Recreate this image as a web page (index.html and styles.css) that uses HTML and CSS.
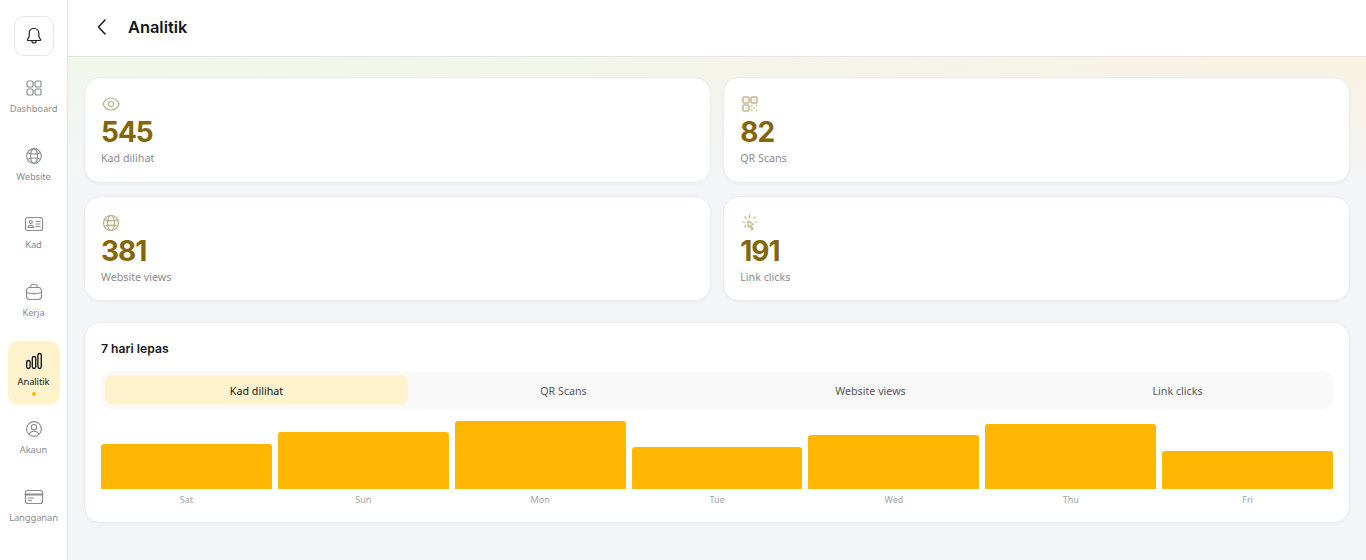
FILE: index.html
```html
<!DOCTYPE html>
<html lang="ms">
<head>
    <meta charset="UTF-8">
    <meta name="viewport" content="width=device-width, initial-scale=1.0">
    <title>Analitik</title>
    <link rel="stylesheet" href="styles.css">
</head>
<body>
    <aside class="sidebar">
        <button class="bell">
            <svg width="20" height="20" viewBox="0 0 20 20" fill="none" stroke="#22242a" stroke-width="1.2" stroke-linecap="round" stroke-linejoin="round"><path d="M10 2.500c-2.900 0-4.800 2.100-4.800 4.900v2.700c0 1.300-1.200 2.200-1.800 3.400-.2.500.1 1 .7 1h11.800c.6 0 .9-.5.7-1-.6-1.200-1.800-2.100-1.800-3.400V7.400c0-2.800-1.900-4.900-4.800-4.900z"/><path d="M7.800 14.700c.1 1.300 1 2.300 2.200 2.300s2.100-1 2.200-2.300"/></svg>
        </button>
        <nav class="nav">
            <a class="nav-item">
                <svg width="20" height="20" viewBox="0 0 20 20" fill="none" stroke="#8b8d93" stroke-width="1.2"><rect x="3" y="3" width="6" height="6" rx="1.6"/><rect x="11" y="3" width="6" height="6" rx="1.6"/><rect x="3" y="11" width="6" height="6" rx="1.6"/><rect x="11" y="11" width="6" height="6" rx="1.6"/></svg>
                <span>Dashboard</span>
            </a>
            <a class="nav-item">
                <svg width="20" height="20" viewBox="0 0 20 20" fill="none" stroke="#8b8d93" stroke-width="1.1"><circle cx="10" cy="10" r="7.4"/><ellipse cx="10" cy="10" rx="3.500" ry="7.4"/><path d="M3.400 6.800c4 1.400 9.200 1.400 13.200 0M3.400 13.200c4-1.400 9.200-1.400 13.200 0"/></svg>
                <span>Website</span>
            </a>
            <a class="nav-item">
                <svg width="20" height="20" viewBox="0 0 20 20" fill="none" stroke="#8b8d93" stroke-width="1.2" stroke-linecap="round"><rect x="1.500" y="3.500" width="17" height="13" rx="2"/><circle cx="6.800" cy="8" r="1.500"/><path d="M4.200 13.500c0-3 5.200-3 5.200 0zM12 7.500h4M12 10h4M12 12.500h4"/></svg>
                <span>Kad</span>
            </a>
            <a class="nav-item">
                <svg width="20" height="20" viewBox="0 0 20 20" fill="none" stroke="#8b8d93" stroke-width="1.1" stroke-linecap="round"><rect x="2.600" y="5.500" width="14.800" height="12" rx="3"/><path d="M6.800 5.500V4.200c0-1 .8-1.700 1.700-1.700h3c.9 0 1.700.7 1.700 1.700v1.300M2.600 10.500c4.500 1.600 10.300 1.600 14.800 0M10 11v1"/></svg>
                <span>Kerja</span>
            </a>
            <a class="nav-item active">
                <svg width="20" height="20" viewBox="0 0 20 20" fill="none" stroke="#1a1c22" stroke-width="1.4"><rect x="2.700" y="9.500" width="3.400" height="8" rx="1.700"/><rect x="8.300" y="5.500" width="3.400" height="12" rx="1.700"/><rect x="13.900" y="2.500" width="3.400" height="15" rx="1.700"/></svg>
                <span>Analitik</span>
                <i class="dot"></i>
            </a>
            <a class="nav-item">
                <svg width="20" height="20" viewBox="0 0 20 20" fill="none" stroke="#8b8d93" stroke-width="1.1"><circle cx="10" cy="10" r="7.4"/><circle cx="10" cy="8.200" r="2.700"/><path d="M5 15.300c1-2.200 3-3.100 5-3.100s4 .9 5 3.100"/></svg>
                <span>Akaun</span>
            </a>
            <a class="nav-item">
                <svg width="20" height="20" viewBox="0 0 20 20" fill="none" stroke="#8b8d93" stroke-width="1.2" stroke-linecap="round"><rect x="1.500" y="3.500" width="17" height="13" rx="2"/><path d="M1.500 7.500h17" stroke-width="2"/><path d="M4.500 11h5M4.500 13.500h3"/></svg>
                <span>Langganan</span>
            </a>
        </nav>
    </aside>

    <div class="page">
        <header class="topbar">
            <svg width="20" height="20" viewBox="0 0 20 20" fill="none" stroke="#1a1c22" stroke-width="1.5" stroke-linecap="round" stroke-linejoin="round"><path d="M13 3l-6.500 7 6.500 7"/></svg>
            <h1>Analitik</h1>
        </header>

        <main class="main">
            <section class="stats">
                <div class="stat">
                    <svg width="20" height="20" viewBox="0 0 20 20" fill="none" stroke="#bdac80" stroke-width="1.1"><path d="M1.800 10c1.800-3.900 4.800-6 8.200-6s6.400 2.100 8.200 6c-1.800 3.900-4.800 6-8.200 6s-6.400-2.100-8.200-6z"/><circle cx="10" cy="10" r="2.500"/></svg>
                    <div class="stat-num">545</div>
                    <div class="stat-label">Kad dilihat</div>
                </div>
                <div class="stat">
                    <svg width="20" height="20" viewBox="0 0 20 20" fill="none" stroke="#c6b78e" stroke-width="1.500"><rect x="3" y="3" width="6" height="6" rx="1"/><rect x="11" y="3" width="6" height="6" rx="1"/><rect x="3" y="11" width="6" height="6" rx="1"/><path d="M5.500 6h1M13.500 6h1M5.500 14h1M11 11.500h1.500M16 11.500h1M13.500 14h1.500M11 16.500h1.500M16 16.500h1"/></svg>
                    <div class="stat-num">82</div>
                    <div class="stat-label">QR Scans</div>
                </div>
                <div class="stat">
                    <svg width="20" height="20" viewBox="0 0 20 20" fill="none" stroke="#bdac80" stroke-width="1.2"><circle cx="10" cy="10" r="7.500"/><ellipse cx="10" cy="10" rx="3.500" ry="7.500"/><path d="M3.400 6.800c4 1.400 9.200 1.400 13.200 0M3.400 13.200c4-1.400 9.200-1.400 13.200 0"/></svg>
                    <div class="stat-num">381</div>
                    <div class="stat-label">Website views</div>
                </div>
                <div class="stat">
                    <svg width="20" height="20" viewBox="0 0 20 20" fill="none" stroke="#c6b78e" stroke-width="1.2" stroke-linecap="round" stroke-linejoin="round"><path d="M8 8l5.500 3.200-2.300.9 1.600 4-1.200.5-1.700-3.900-1.700 1.500z"/><path d="M9.500 2v2.500M4.800 3.800l1.500 1.500M15.200 3.800l-1.500 1.500M2.800 9h2.200M4.800 14l1.300-1.300M15 9h2.200"/></svg>
                    <div class="stat-num">191</div>
                    <div class="stat-label">Link clicks</div>
                </div>
            </section>

            <section class="chart-card">
                <h2>7 hari lepas</h2>
                <div class="tabs">
                    <button class="active">Kad dilihat</button>
                    <button>QR Scans</button>
                    <button>Website views</button>
                    <button>Link clicks</button>
                </div>
                <div class="chart">
                    <div class="col"><div class="bar" style="height: 45px"></div><span>Sat</span></div>
                    <div class="col"><div class="bar" style="height: 57px"></div><span>Sun</span></div>
                    <div class="col"><div class="bar" style="height: 68px"></div><span>Mon</span></div>
                    <div class="col"><div class="bar" style="height: 42px"></div><span>Tue</span></div>
                    <div class="col"><div class="bar" style="height: 54px"></div><span>Wed</span></div>
                    <div class="col"><div class="bar" style="height: 65px"></div><span>Thu</span></div>
                    <div class="col"><div class="bar" style="height: 38px"></div><span>Fri</span></div>
                </div>
            </section>
        </main>
    </div>
</body>
</html>
```

FILE: styles.css
```css
* {
    box-sizing: border-box;
}
body {
    font-family: "Noto Sans", "Open Sans", sans-serif;
    margin: 0;
    display: flex;
    height: 560px;
    overflow: hidden;
    background: #f4f5f9;
    color: #14161c;
}
.sidebar {
    width: 68px;
    flex-shrink: 0;
    background: #fff;
    border-right: 1px solid #e3e4e8;
    display: flex;
    flex-direction: column;
    align-items: center;
    padding-top: 16px;
}
.bell {
    width: 40px;
    height: 40px;
    background: #fff;
    border: 1px solid #e6e7ea;
    border-radius: 10px;
    display: flex;
    align-items: center;
    justify-content: center;
    padding: 0;
}
.nav {
    margin-top: 11.5px;
    display: flex;
    flex-direction: column;
    gap: 4px;
}
.nav-item {
    width: 52px;
    height: 64.33px;
    border-radius: 10px;
    display: flex;
    flex-direction: column;
    align-items: center;
    padding-top: 10px;
    font-size: 9.4px;
    letter-spacing: -0.1px;
    line-height: 14px;
    color: #8a8c92;
    white-space: nowrap;
}
.nav-item span {
    margin-top: 4px;
}
.nav-item.active {
    background: #fff3cd;
    color: #14161c;
}
.dot {
    width: 4px;
    height: 4px;
    border-radius: 50%;
    background: #ffb703;
    margin-top: 3px;
}
.page {
    flex: 1;
    min-width: 0;
    display: flex;
    flex-direction: column;
}
.topbar {
    height: 57px;
    flex-shrink: 0;
    background: #fff;
    border-bottom: 1px solid #e3e4e8;
    display: flex;
    align-items: center;
    padding: 0 0 2px 24px;
    gap: 16px;
}
.topbar h1 {
    margin: 0;
    font-family: Inter, sans-serif;
    font-size: 16.4px;
    font-weight: 600;
}
.main {
    flex: 1;
    padding: 20px 16px 0;
    background:
        linear-gradient(180deg, rgba(244, 245, 249, 0) 0, #f4f5f9 130px),
        linear-gradient(90deg, #f0f8ea 0, #f1f7e8 25%, #f5f3ea 60%, #f9f2df 100%);
}
.stats {
    display: grid;
    grid-template-columns: 1fr 1fr;
    gap: 13px 12.5px;
}
.stat, .chart-card {
    background: #fff;
    border: 1px solid #ebecef;
    border-radius: 16px;
    box-shadow: 0 1px 3px rgba(0, 0, 0, 0.04);
}
.stat {
    height: 105.5px;
    padding: 16px 16px 0;
}
.stat svg {
    display: block;
}
.stat-num {
    font-family: Inter, sans-serif;
    font-weight: 700;
    font-size: 28px;
    line-height: 30px;
    color: #846609;
    margin-top: 3px;
    letter-spacing: -1px;
}
.stat-label {
    font-size: 10.7px;
    line-height: 16px;
    color: #8a8c92;
    margin-top: 3px;
}
.chart-card {
    margin-top: 21px;
    height: 201px;
    padding: 17px 16px 0;
}
.chart-card h2 {
    margin: 0;
    font-family: Inter, sans-serif;
    font-size: 12.2px;
    font-weight: 600;
    line-height: 18px;
}
.tabs {
    margin-top: 13px;
    height: 38px;
    background: #f9f9fa;
    border-radius: 10px;
    display: grid;
    grid-template-columns: repeat(4, 1fr);
    gap: 4px;
    padding: 4px;
}
.tabs button {
    border: none;
    background: transparent;
    border-radius: 8px;
    font-family: "Noto Sans", sans-serif;
    font-size: 10.7px;
    color: #55575d;
    padding: 1px 0 0;
}
.tabs button.active {
    background: #fff3cd;
    color: #14161c;
}
.chart {
    margin-top: 12px;
    height: 68px;
    display: flex;
    gap: 6px;
    align-items: flex-end;
}
.col {
    flex: 1;
    height: 100%;
    display: flex;
    flex-direction: column;
    justify-content: flex-end;
    align-items: center;
    position: relative;
}
.bar {
    width: 100%;
    background: #ffb703;
    border-radius: 3px 3px 0 0;
}
.col span {
    position: absolute;
    top: 72px;
    font-size: 9px;
    line-height: 14px;
    color: #a0a2a8;
}
```
